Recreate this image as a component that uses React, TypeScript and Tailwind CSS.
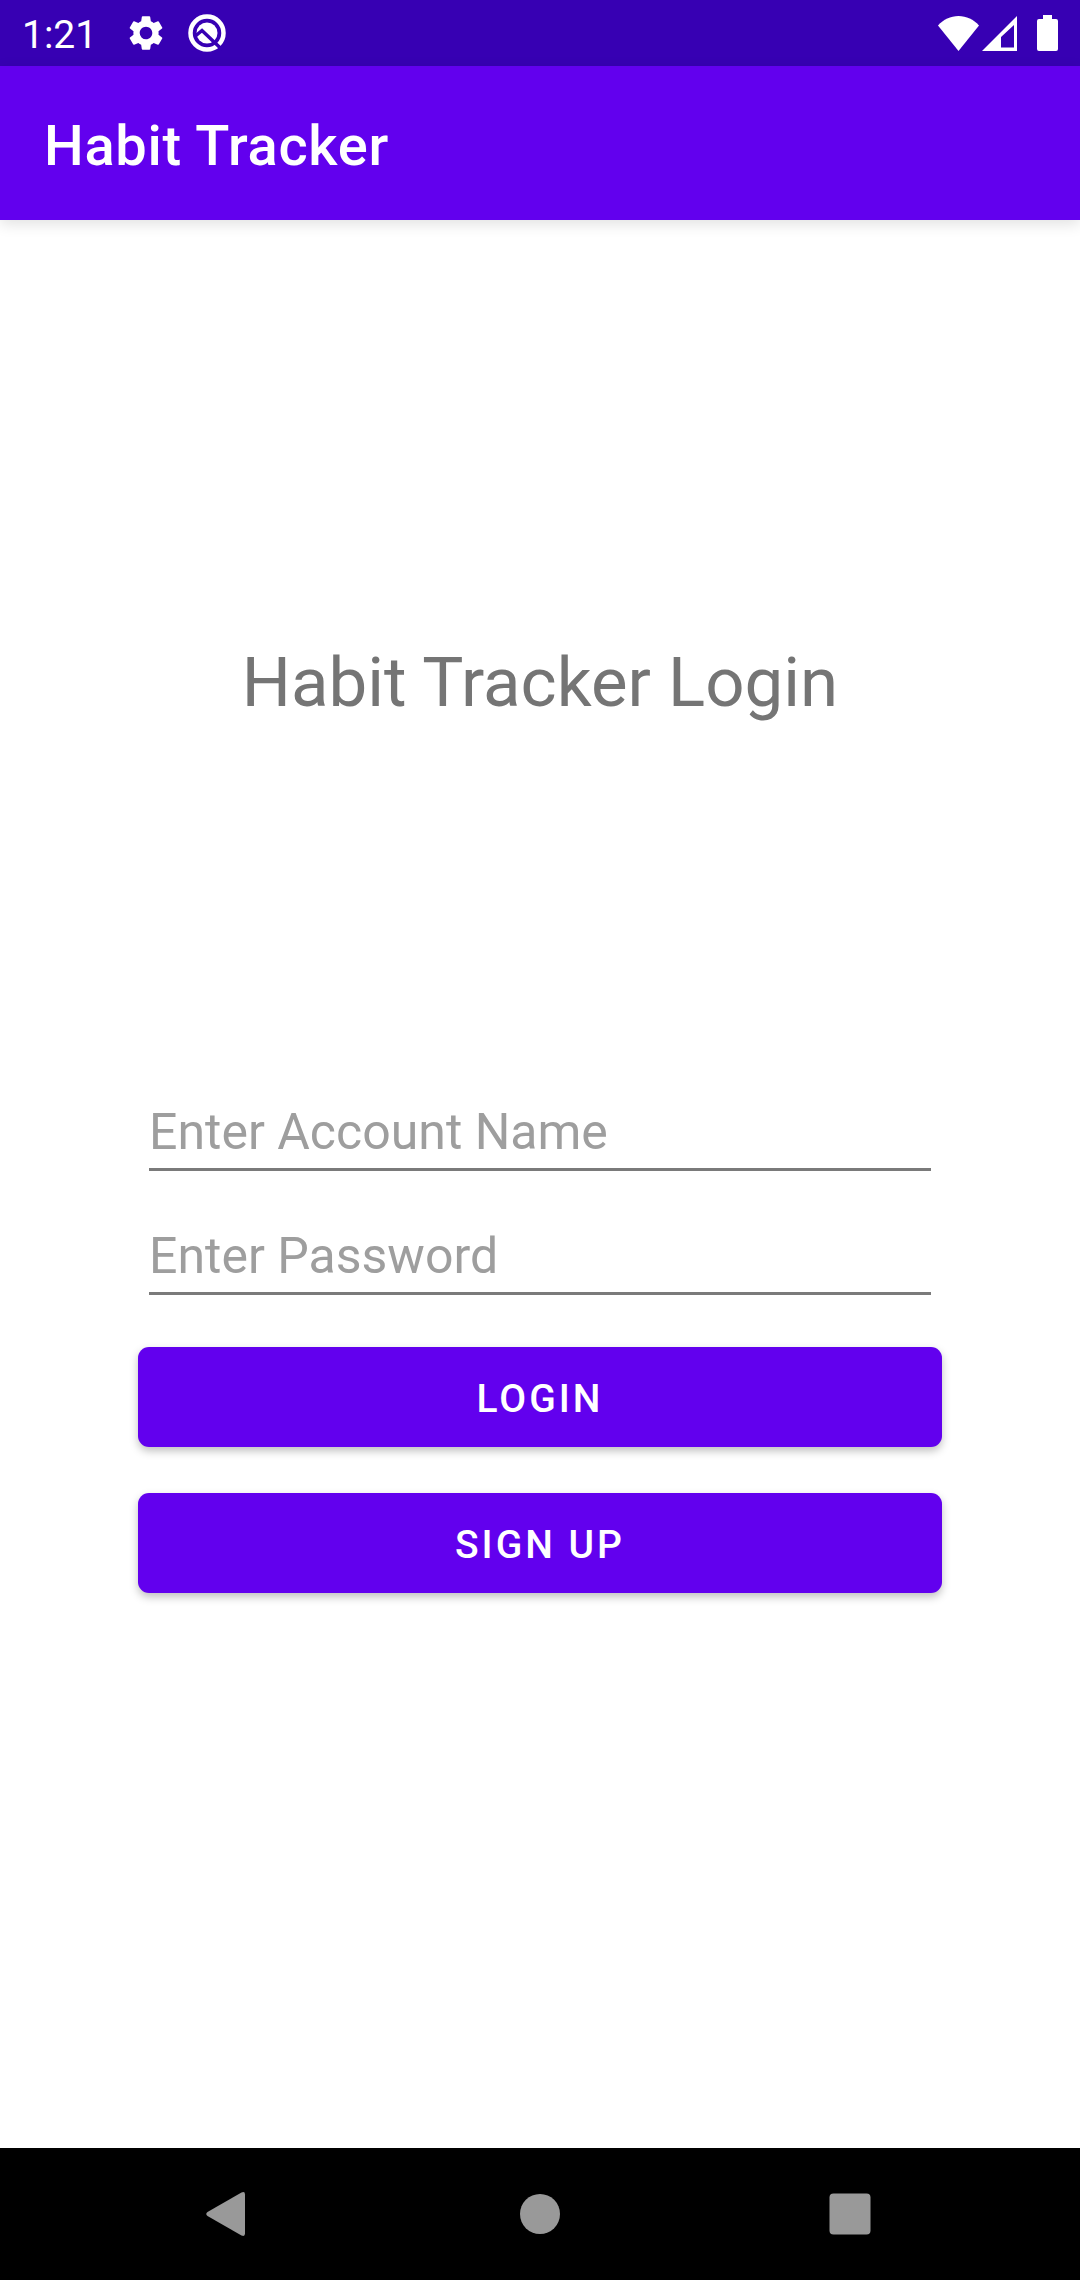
import type { ReactNode } from "react";

function GearIcon() {
  return (
    <svg viewBox="0 0 24 24" className="size-[42px] fill-white" aria-hidden="true">
      <path d="M19.14 12.94c.04-.3.06-.61.06-.94 0-.32-.02-.64-.07-.94l2.03-1.58a.49.49 0 0 0 .12-.61l-1.92-3.32a.49.49 0 0 0-.59-.22l-2.39.96c-.5-.38-1.03-.7-1.62-.94l-.36-2.54a.48.48 0 0 0-.48-.41h-3.84a.47.47 0 0 0-.47.41l-.36 2.54c-.59.24-1.13.57-1.62.94l-2.39-.96a.48.48 0 0 0-.59.22L2.74 8.87a.47.47 0 0 0 .12.61l2.03 1.58c-.05.3-.09.63-.09.94s.02.64.07.94l-2.03 1.58a.49.49 0 0 0-.12.61l1.92 3.32c.12.22.37.29.59.22l2.39-.96c.5.38 1.03.7 1.62.94l.36 2.54c.05.24.24.41.48.41h3.84c.24 0 .44-.17.47-.41l.36-2.54c.59-.24 1.13-.56 1.62-.94l2.39.96c.22.08.47 0 .59-.22l1.92-3.32a.47.47 0 0 0-.12-.61l-2.01-1.58zM12 15.6A3.61 3.61 0 0 1 8.4 12c0-1.98 1.62-3.6 3.6-3.6s3.6 1.62 3.6 3.6-1.62 3.6-3.6 3.6z" />
    </svg>
  );
}

function QIcon() {
  return (
    <svg viewBox="0 0 42 42" className="size-[42px]" fill="none" aria-hidden="true">
      <circle cx="21" cy="21" r="16.5" stroke="#fff" strokeWidth="4.5" />
      <circle cx="21" cy="21" r="10.5" fill="#fff" />
      <path d="M10 23.5 16 18.5 36 37.5" stroke="#3700B3" strokeWidth="3.5" />
    </svg>
  );
}

function WifiIcon() {
  return (
    <svg viewBox="0 0 41 35" className="h-[35px] w-[41px] fill-white" aria-hidden="true">
      <path d="M20.500 35 0 9.500C5.500 3.500 12.500 0 20.500 0S35.500 3.500 41 9.500Z" />
    </svg>
  );
}

function SignalIcon() {
  return (
    <svg viewBox="0 0 35 35" className="size-[35px] fill-white" aria-hidden="true">
      <path fillRule="evenodd" d="M35 0V35H0ZM32 9 19 21V31.500H32Z" />
    </svg>
  );
}

function BatteryIcon() {
  return (
    <svg viewBox="0 0 21 36" className="h-9 w-[21px] fill-white" aria-hidden="true">
      <path d="M6 0H15V4H19A2 2 0 0 1 21 6V34A2 2 0 0 1 19 36H2A2 2 0 0 1 0 34V6A2 2 0 0 1 2 4H6Z" />
    </svg>
  );
}

function StatusBar() {
  return (
    <div className="flex h-[66px] items-center justify-between bg-[#3700B3] px-[22px] text-white">
      <div className="flex items-center">
        <span className="w-[103px] pt-1 text-[39px] leading-[44px]">1:21</span>
        <div className="flex items-center gap-[19px]">
          <GearIcon />
          <QIcon />
        </div>
      </div>
      <div className="flex items-center">
        <div className="flex items-center gap-[3px] pr-5">
          <WifiIcon />
          <SignalIcon />
        </div>
        <BatteryIcon />
      </div>
    </div>
  );
}

function Field({ id, label, type }: { id: string; label: string; type: string }) {
  return (
    <input
      id={id}
      type={type}
      aria-label={label}
      placeholder={label}
      className="h-[91px] w-full border-b-[3px] border-[#7a7a7a] bg-transparent pt-4 text-[50px] text-black outline-none placeholder:text-[#9e9e9e]"
    />
  );
}

function ActionButton({ children, type }: { children: ReactNode; type: "submit" | "button" }) {
  return (
    <button
      type={type}
      className="h-[100px] w-full rounded-[11px] bg-[#6200EE] pt-1 text-[39px] font-medium tracking-[3px] text-white uppercase shadow-[0_4px_8px_rgba(0,0,0,0.25)]"
    >
      {children}
    </button>
  );
}

function NavButton({ label, children }: { label: string; children: ReactNode }) {
  return (
    <button type="button" aria-label={label} className="flex size-24 items-center justify-center">
      <svg viewBox="0 0 48 48" className="size-12 fill-[#999]" aria-hidden="true">
        {children}
      </svg>
    </button>
  );
}

export default function App() {
  return (
    <div className="flex min-h-screen flex-col bg-white font-[Roboto,sans-serif]">
      <StatusBar />
      <header className="flex h-[154px] items-center bg-[#6200EE] px-11 shadow-[0_4px_14px_rgba(0,0,0,0.12)]">
        <h1 className="pt-1.5 text-[56px] leading-[64px] font-medium tracking-[0.0125em] text-white">Habit Tracker</h1>
      </header>
      <main className="flex-1 px-[138px] pt-[423px]">
        <h2 className="text-center text-[69px] leading-[80px] text-[#757575]">Habit Tracker Login</h2>
        <form className="pt-[357px]" onSubmit={(e) => e.preventDefault()}>
          <div className="flex flex-col gap-[33px] px-[11px]">
            <Field id="account" label="Enter Account Name" type="text" />
            <Field id="password" label="Enter Password" type="password" />
          </div>
          <div className="flex flex-col gap-[46px] pt-[52px]">
            <ActionButton type="submit">Login</ActionButton>
            <ActionButton type="button">Sign up</ActionButton>
          </div>
        </form>
      </main>
      <nav className="flex h-[132px] items-center justify-center gap-[214px] bg-black">
        <NavButton label="Back">
          <path d="M1.500 22 35.500 2.500Q39 1 39 4.500V43.500Q39 47 35.500 45.500L1.500 26Q-1 24 1.500 22Z" />
        </NavButton>
        <NavButton label="Home">
          <circle cx="24" cy="24" r="20" />
        </NavButton>
        <NavButton label="Recent apps">
          <rect x="3.500" y="3.500" width="41" height="41" rx="4" />
        </NavButton>
      </nav>
    </div>
  );
}
